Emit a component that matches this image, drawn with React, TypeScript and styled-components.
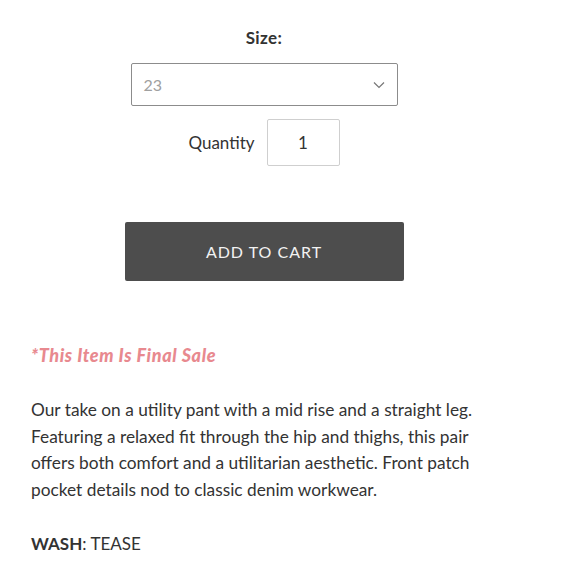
import React from "react";
import styled, { createGlobalStyle } from "styled-components";

const Global = createGlobalStyle`
  html, body { margin: 0; padding: 0; background: #fff; }
  body { font-family: Lato, "Open Sans", sans-serif; color: #333; }
`;

const Page = styled.div`
  width: 466px;
  margin-left: 31px;
  padding-top: 27px;
  display: flex;
  flex-direction: column;
`;

const Centered = styled.div`
  display: flex;
  flex-direction: column;
  align-items: center;
`;

const SizeLabel = styled.div`
  font-weight: 700;
  font-size: 17px;
  line-height: 22px;
  letter-spacing: 0.4px;
  color: #333;
`;

const Select = styled.div`
  margin-top: 14px;
  width: 267px;
  height: 43px;
  box-sizing: border-box;
  border: 1px solid #8c8c8c;
  border-radius: 2px;
  display: flex;
  align-items: center;
  justify-content: space-between;
  padding: 0 12px 0 12px;
  font-size: 16px;
  color: #a0a0a0;
`;

const QtyRow = styled.div`
  margin-top: 13px;
  display: flex;
  align-items: center;
  gap: 12px;
`;

const QtyLabel = styled.span`
  font-size: 17px;
  color: #333;
`;

const QtyInput = styled.div`
  width: 73px;
  height: 47px;
  box-sizing: border-box;
  border: 1px solid #cfcfcf;
  border-radius: 2px;
  display: flex;
  align-items: center;
  justify-content: center;
  font-size: 17px;
  color: #333;
`;

const Button = styled.div`
  margin-top: 56px;
  width: 279px;
  height: 59px;
  background: #4d4d4d;
  border-radius: 2px;
  display: flex;
  align-items: center;
  justify-content: center;
  color: #f2f2f2;
  font-size: 16px;
  letter-spacing: 1px;
`;

const FinalSale = styled.div`
  margin-top: 63px;
  color: #e8898f;
  font-weight: 900;
  font-style: italic;
  font-size: 18px;
  line-height: 22px;
  letter-spacing: 0.6px;
`;

const Description = styled.p`
  margin: 31px 0 0;
  font-size: 17.3px;
  line-height: 26.5px;
  color: #333;
`;

const Wash = styled.p`
  margin: 29px 0 0;
  font-size: 17px;
  line-height: 24px;
  color: #333;
  b { font-weight: 700; }
`;

export default function App() {
  return (
    <>
      <Global />
      <Page>
        <Centered>
          <SizeLabel>Size:</SizeLabel>
          <Select>
            <span>23</span>
            <svg width="12" height="8" viewBox="0 0 12 8" fill="none">
              <path d="M1 1.5l5 5 5-5" stroke="#777" strokeWidth="1.2" />
            </svg>
          </Select>
          <QtyRow>
            <QtyLabel>Quantity</QtyLabel>
            <QtyInput>1</QtyInput>
          </QtyRow>
          <Button>ADD TO CART</Button>
        </Centered>
        <FinalSale>*This Item Is Final Sale</FinalSale>
        <Description>
          Our take on a utility pant with a mid rise and a straight leg. Featuring a relaxed fit through the hip and thighs, this pair offers both comfort and a utilitarian aesthetic. Front patch pocket details nod to classic denim workwear.
        </Description>
        <Wash>
          <b>WASH</b>: TEASE
        </Wash>
      </Page>
    </>
  );
}
